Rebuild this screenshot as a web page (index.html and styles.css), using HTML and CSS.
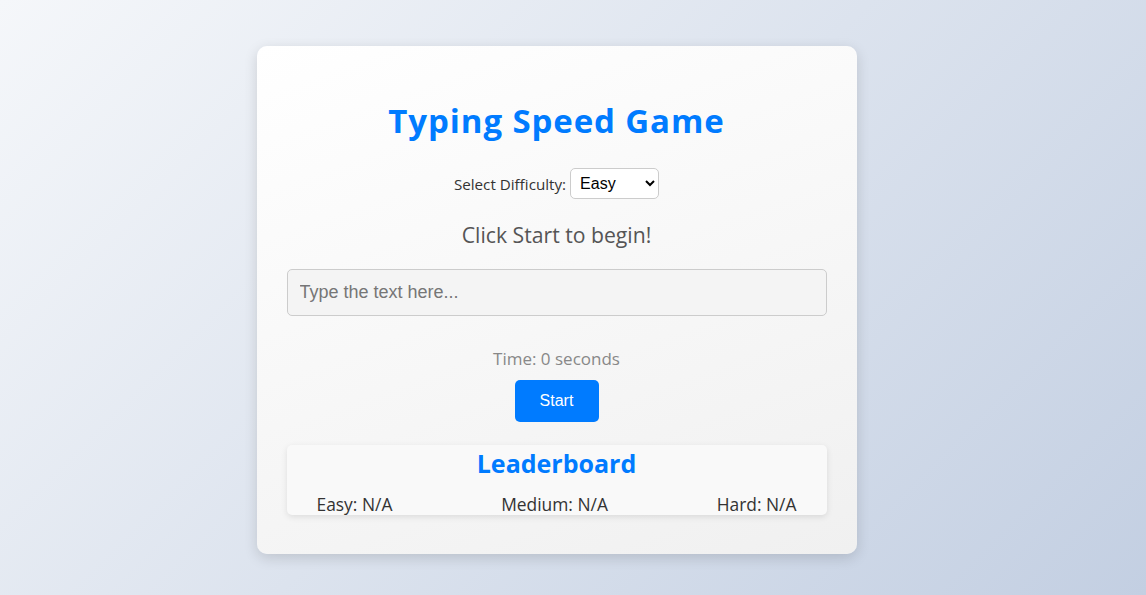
FILE: index.html
```html
<!DOCTYPE html>
<html lang="en">
<head>
<meta charset="utf-8">
<title>Typing Speed Game</title>
<link rel="stylesheet" href="styles.css">
</head>
<body>
<div class="page">
  <main class="card">
    <h1 class="title">Typing Speed Game</h1>
    <div class="difficulty">
      <label class="difficulty-label" for="difficulty">Select Difficulty:</label>
      <select class="difficulty-select" id="difficulty">
        <option>Easy</option>
        <option>Medium</option>
        <option>Hard</option>
      </select>
    </div>
    <p class="prompt">Click Start to begin!</p>
    <input class="type-input" type="text" placeholder="Type the text here...">
    <p class="timer">Time: 0 seconds</p>
    <button class="start-btn" type="button">Start</button>
    <section class="leaderboard">
      <h2 class="leaderboard-title">Leaderboard</h2>
      <div class="scores">
        <span class="score">Easy: N/A</span>
        <span class="score">Medium: N/A</span>
        <span class="score">Hard: N/A</span>
      </div>
    </section>
  </main>
</div>
</body>
</html>
```
FILE: styles.css
```css
* {
  box-sizing: border-box;
}

html, body {
  margin: 0;
  height: 100%;
}

body {
  background: linear-gradient(135deg, #f5f7fa 0%, #c3cfe2 100%);
  font-family: "Open Sans", "Noto Sans", sans-serif;
  overflow: hidden;
}

.page {
  display: flex;
  justify-content: center;
  padding: 46px 33px 0 0;
}

.card {
  width: 600px;
  padding: 30px 30px 39px;
  border-radius: 10px;
  background: linear-gradient(160deg, #ffffff 0%, #f0f0f0 100%);
  box-shadow: 0 4px 14px rgba(0, 0, 0, 0.14);
  display: flex;
  flex-direction: column;
  align-items: center;
  text-align: center;
}

.title {
  margin: 25px 0 0;
  font-size: 33px;
  line-height: 40px;
  font-weight: 700;
  letter-spacing: 0.9px;
  color: #007bff;
}

.difficulty {
  margin-top: 27px;
  height: 31px;
  display: flex;
  align-items: center;
  justify-content: center;
  gap: 4px;
}

.difficulty-label {
  font-size: 15.2px;
  line-height: 20px;
  color: #333;
}

.difficulty-select {
  width: 89px;
  height: 31px;
  padding: 5px;
  font-family: "Liberation Sans", Arial, sans-serif;
  font-size: 16px;
  color: #000;
  background: #fff;
  border: 1px solid #ccc;
  border-radius: 5px;
}

.prompt {
  margin: 21px 0 0;
  font-size: 21.2px;
  line-height: 30px;
  color: #555;
}

.type-input {
  margin-top: 19px;
  width: 100%;
  height: 47px;
  padding: 0 12px;
  font-family: "Liberation Sans", Arial, sans-serif;
  font-size: 18px;
  color: #333;
  background: #f4f4f4;
  border: 1px solid #ccc;
  border-radius: 5px;
}

.type-input::placeholder {
  color: #767676;
}

.timer {
  margin: 31px 0 0;
  font-size: 17px;
  line-height: 24px;
  color: #888;
}

.start-btn {
  margin-top: 9px;
  width: 84px;
  height: 42px;
  padding: 0;
  font-family: "Liberation Sans", Arial, sans-serif;
  font-size: 16px;
  color: #fff;
  background: #007bff;
  border: none;
  border-radius: 5px;
}

.leaderboard {
  margin-top: 23px;
  width: 100%;
  padding: 3px 30px 0;
  background: #f9f9f9;
  border-radius: 5px;
  box-shadow: 0 2px 6px rgba(0, 0, 0, 0.1);
}

.leaderboard-title {
  margin: 0;
  font-size: 25px;
  line-height: 30px;
  font-weight: 700;
  color: #007bff;
}

.scores {
  margin-top: 15px;
  display: flex;
  justify-content: space-between;
}

.score {
  font-size: 17.4px;
  line-height: 22px;
  color: #333;
}
```
